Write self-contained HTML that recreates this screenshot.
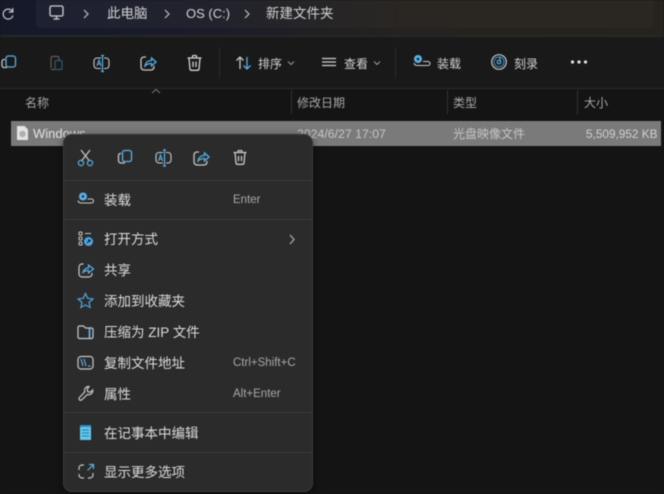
<!DOCTYPE html>
<html lang="zh-CN"><head><meta charset="utf-8"><style>
html,body{margin:0;padding:0;background:#141414}
#p{position:relative;width:664px;height:494px;overflow:hidden;background:#141414;font-family:"Liberation Sans","Noto Sans CJK SC",sans-serif;color:#d2d2d2;filter:blur(.5px)}
#p div,#p span,#p svg{position:absolute}
.t{white-space:nowrap;line-height:18px;height:18px}
.m{font-size:13.5px;left:104px;color:#dcdcdc}
.s{font-size:11.5px;left:233px;color:#a8a8a8}
.d{left:63px;width:249px;height:1px;background:#383838}
.h{font-size:12px;color:#a6a6a6;top:94px}
.v{width:1px;background:#333}
svg{overflow:visible}
</style></head><body><div id="p">
<div style="left:0;top:0;width:664px;height:35px;background:linear-gradient(90deg,#15192a 0,#1a1c2a 30%,#25221f 60%,#26231e 100%)"></div>
<div style="left:36px;top:-8px;width:618px;height:36px;border-radius:5px;background:linear-gradient(90deg,#1e2133 0,#22232c 30%,#2a2722 60%,#2a2722 100%)"></div>
<div style="left:0;top:35px;width:664px;height:2px;background:#262626"></div>
<div style="left:0;top:37px;width:664px;height:52px;background:#191919"></div>
<div style="left:0;top:88px;width:664px;height:1px;background:#2c2c2c"></div>

<svg style="left:0;top:4px" width="16" height="20" fill="none" stroke="#c8c8c8" stroke-width="1.2"><path d="M12.5 7.5A5 5 0 1 0 13 11.5"/><path d="M12.8 4v4h-4"/></svg>
<svg style="left:48px;top:4px" width="18" height="18" fill="none" stroke="#d0d0d0" stroke-width="1.3"><rect x="2" y="2" width="13" height="10" rx="1.6"/><path d="M5.5 15h6M8.500 12v3"/></svg>
<svg style="left:82px;top:9px" width="8" height="10" fill="none" stroke="#c0c0c0" stroke-width="1.2"><path d="M2 1l4 4-4 4"/></svg>
<span class="t" style="left:107px;top:5px;font-size:13.5px">此电脑</span>
<svg style="left:163px;top:9px" width="8" height="10" fill="none" stroke="#c0c0c0" stroke-width="1.2"><path d="M2 1l4 4-4 4"/></svg>
<span class="t" style="left:186px;top:5px;font-size:13px">OS (C:)</span>
<svg style="left:243px;top:9px" width="8" height="10" fill="none" stroke="#c0c0c0" stroke-width="1.2"><path d="M2 1l4 4-4 4"/></svg>
<span class="t" style="left:266px;top:5px;font-size:13.5px">新建文件夹</span>

<!-- toolbar -->
<svg style="left:0;top:53px" width="20" height="20" fill="none" stroke-width="1.3"><rect x="6" y="3" width="9.500" height="11" rx="2.400" stroke="#5ab0e6"/><path d="M5 6.500H4a2 2 0 0 0-2 2v4a2 2 0 0 0 2 2h3" stroke="#c8c8c8"/></svg>
<svg style="left:47px;top:53px" width="20" height="20" fill="none" stroke-width="1.2"><path d="M4 15V5a1.500 1.500 0 0 1 1.500-1.500h5A1.500 1.500 0 0 1 12 5v2" stroke="#5c5c5c"/><rect x="8" y="7.500" width="7" height="9" rx="1.400" stroke="#2f5a70"/><path d="M4 16.500h4" stroke="#5c5c5c"/></svg>
<svg style="left:92px;top:53px" width="20" height="20" fill="none" stroke-width="1.100"><rect x="2" y="5" width="15" height="10.500" rx="3" stroke="#c8c8c8"/><rect x="9" y="3" width="3" height="15" fill="#191919" stroke="none"/><path d="M10.500 2.500v16M9 2.500h3M9 18.500h3" stroke="#5ab0e6" stroke-width="1.200"/><path d="M5 13l2-6 2 6M5.700 11h2.600" stroke="#5ab0e6"/></svg>
<svg style="left:139px;top:53px" width="20" height="20" fill="none" stroke-width="1.300"><path d="M7 4H5a3 3 0 0 0-3 3v7a3 3 0 0 0 3 3h7a3 3 0 0 0 3-3v-1" stroke="#c8c8c8"/><path d="M6 13c.5-3.500 3-5.500 6.500-5.500V5l4.500 4-4.500 4v-2.500C10 10.500 8 11 6 13z" stroke="#5ab0e6"/></svg>
<svg style="left:185px;top:53px" width="20" height="20" fill="none" stroke="#d2d2d2" stroke-width="1.300"><path d="M2.500 5h14M7.500 5V3.500a1 1 0 0 1 1-1h2a1 1 0 0 1 1 1V5M4 5l1 11a1.500 1.500 0 0 0 1.500 1.300h6A1.500 1.500 0 0 0 14 16l1-11M8 8.500v5.500M11 8.500v5.500"/></svg>
<div class="v" style="left:219px;top:48px;height:30px;background:#2b2b2b"></div>
<svg style="left:235px;top:54px" width="18" height="18" fill="none" stroke-width="1.3"><path d="M5 15V3M1.500 6.500L5 3l3.500 3.500" stroke="#c8c8c8"/><path d="M12 3v12M8.500 11.500L12 15l3.500-3.500" stroke="#5ab0e6"/></svg>
<span class="t" style="left:258px;top:55px;font-size:12px">排序</span>
<svg style="left:287px;top:60px" width="8" height="6" fill="none" stroke="#999"><path d="M1 1.500l3 3 3-3"/></svg>
<svg style="left:321px;top:56px" width="16" height="14" fill="none" stroke="#d0d0d0" stroke-width="1.200"><path d="M1 2.500h14M1 6h14M1 9.500h14"/></svg>
<span class="t" style="left:344px;top:55px;font-size:12px">查看</span>
<svg style="left:373px;top:60px" width="8" height="6" fill="none" stroke="#999"><path d="M1 1.500l3 3 3-3"/></svg>
<div class="v" style="left:395px;top:48px;height:30px;background:#2b2b2b"></div>
<svg style="left:412px;top:53px" width="20" height="18" fill="none"><circle cx="6" cy="6" r="4" fill="#5ab0e6"/><circle cx="6" cy="6" r="1.300" fill="#14222c"/><path d="M11 8.500h5a2 2 0 0 1 0 4H5a3 3 0 0 1-3-2.500" stroke="#c8c8c8" stroke-width="1.100"/></svg>
<span class="t" style="left:437px;top:55px;font-size:12px">装载</span>
<svg style="left:490px;top:53px" width="20" height="20" fill="none"><circle cx="9" cy="9" r="7.300" stroke="#c8c8c8" stroke-width="1.200"/><circle cx="9" cy="9" r="5" stroke="#3c86b4" stroke-width="1.200"/><circle cx="9" cy="9" r="1.800" stroke="#5ab0e6" stroke-width="1.200"/><path d="M10 3.500v5" stroke="#5ab0e6"/></svg>
<span class="t" style="left:514px;top:55px;font-size:12px">刻录</span>
<svg style="left:570px;top:59px" width="18" height="6" fill="#e6e6e6"><circle cx="2.500" cy="3" r="1.600"/><circle cx="9" cy="3" r="1.600"/><circle cx="15.500" cy="3" r="1.600"/></svg>

<!-- header -->
<svg style="left:150px;top:88px" width="12" height="7" fill="none" stroke="#7a7a7a"><path d="M2 5l4-3.500L10 5"/></svg>
<span class="t h" style="left:25px">名称</span>
<div class="v" style="left:291px;top:90px;height:24px"></div>
<span class="t h" style="left:297px">修改日期</span>
<div class="v" style="left:447px;top:90px;height:24px"></div>
<span class="t h" style="left:453px">类型</span>
<div class="v" style="left:577px;top:90px;height:24px"></div>
<span class="t h" style="left:584px">大小</span>

<!-- row -->
<div style="left:11px;top:121px;width:650px;height:25px;background:#7a7a7a"></div>
<svg style="left:16px;top:125px" width="13" height="16"><path d="M1 1h7.500L12 4.500V15H1z" fill="#e4e4e4"/><circle cx="6.500" cy="9" r="3.200" fill="#b0b0b0"/></svg>
<span class="t" style="left:33px;top:125px;font-size:13px;color:#e2e2e2">Windows</span>
<span class="t" style="left:297px;top:125px;font-size:12.300px;color:#c6c6c6">2024/6/27 17:07</span>
<span class="t" style="left:453px;top:125px;font-size:12px;color:#c6c6c6">光盘映像文件</span>
<span class="t" style="left:586px;top:125px;font-size:11.800px;color:#d0d0d0">5,509,952 KB</span>

<!-- menu -->
<div style="left:63px;top:134px;width:248px;height:356px;background:#2b2b2b;border:1px solid #3a3a3a;border-radius:9px;box-shadow:0 2px 8px rgba(0,0,0,.5)"></div>

<svg style="left:77px;top:149px" width="18" height="18" fill="none" stroke-width="1.200"><path d="M4 1l8.500 11M13 1L4.500 12" stroke="#c8c8c8"/><circle cx="4" cy="14" r="2.600" stroke="#5ab0e6"/><circle cx="13" cy="14" r="2.600" stroke="#5ab0e6"/></svg>
<svg style="left:117px;top:149px" width="18" height="18" fill="none" stroke-width="1.300"><rect x="5.500" y="1.500" width="9" height="11" rx="2.200" stroke="#5ab0e6"/><path d="M4 4.500a2 2 0 0 0-2.500 2v5a2.500 2.500 0 0 0 2.500 2.500h4" stroke="#c8c8c8"/></svg>
<svg style="left:155px;top:149px" width="18" height="18" fill="none" stroke-width="1.100"><rect x="1" y="3.500" width="15" height="10.500" rx="3" stroke="#c8c8c8"/><rect x="8" y="2" width="3" height="14" fill="#2b2b2b" stroke="none"/><path d="M9.500 1v16M8 1h3M8 17h3" stroke="#5ab0e6" stroke-width="1.200"/><path d="M3.500 12l2-6 2 6M4.200 10h2.600" stroke="#5ab0e6"/></svg>
<svg style="left:193px;top:149px" width="18" height="18" fill="none" stroke-width="1.300"><path d="M6 3H4a3 3 0 0 0-3 3v7a3 3 0 0 0 3 3h7a3 3 0 0 0 3-3v-1" stroke="#c8c8c8"/><path d="M5 12c.5-3.500 3-5.500 6.500-5.500V4l4.500 4-4.500 4V9.500C9 9.500 7 10 5 12z" stroke="#5ab0e6"/></svg>
<svg style="left:232px;top:149px" width="18" height="18" fill="none" stroke="#c8c8c8" stroke-width="1.300"><path d="M1.500 3.500h13M6 3.500V2.500a1 1 0 0 1 1-1h2a1 1 0 0 1 1 1v1M3 3.500l1 10.500a1.500 1.500 0 0 0 1.500 1.300h5A1.500 1.500 0 0 0 12 14l1-10.500M6.500 7v5M9.500 7v5"/></svg>
<div class="d" style="top:180px"></div>

<svg style="left:77px;top:190px" width="18" height="18" fill="none"><circle cx="6" cy="6.500" r="4" fill="#5ab0e6"/><circle cx="6" cy="6.500" r="1.200" fill="#14222c"/><path d="M10.500 9h4a2 2 0 0 1 0 4H4a3 3 0 0 1-3-2.500" stroke="#c8c8c8" stroke-width="1.100"/></svg>
<span class="t m" style="top:192px">装载</span><span class="t s" style="top:191px">Enter</span>
<div class="d" style="top:219px"></div>

<svg style="left:78px;top:230px" width="18" height="18" fill="none" stroke="#c8c8c8"><rect x="1" y="2" width="3" height="3" rx=".8"/><rect x="1" y="7" width="3" height="3" rx=".8"/><rect x="1" y="12" width="3" height="3" rx=".8"/><path d="M7 3.500h6"/><circle cx="10.500" cy="11.500" r="4.500" fill="#4aa8e8" stroke="none"/><path d="M9 13l3-3M10 10h2v2" stroke="#15222c"/></svg>
<span class="t m" style="top:231px">打开方式</span>
<svg style="left:288px;top:234px" width="8" height="11" fill="none" stroke="#b0b0b0" stroke-width="1.200"><path d="M2 1l4 4.500-4 4.500"/></svg>

<svg style="left:78px;top:262px" width="17" height="17" fill="none" stroke-width="1.200"><path d="M5.500 2H4a3 3 0 0 0-3 3v7a3 3 0 0 0 3 3h7a3 3 0 0 0 3-3v-1" stroke="#c8c8c8"/><path d="M5 10.500C5.500 7.500 8 6 10.500 6V3l5 4-5 4V8.500c-2.500 0-4 .5-5.500 2z" stroke="#5ab0e6"/></svg>
<span class="t m" style="top:262px">共享</span>

<svg style="left:77px;top:292px" width="18" height="18" fill="none" stroke="#4ea6e0" stroke-width="1.200"><path d="M8.500 1.500l2.200 4.800 5.200.6-3.900 3.500 1.100 5.100-4.600-2.600-4.600 2.600 1.100-5.100L1.100 6.900l5.200-.6z"/></svg>
<span class="t m" style="top:293px">添加到收藏夹</span>

<svg style="left:77px;top:324px" width="18" height="16" fill="none" stroke-width="1.200"><path d="M1 3.500A1.500 1.500 0 0 1 2.500 2h4l2 2h6A1.500 1.500 0 0 1 16 5.500v7.500a1.500 1.500 0 0 1-1.500 1.500h-12A1.500 1.500 0 0 1 1 13z" stroke="#c8c8c8"/><path d="M12.500 4.500v9.500" stroke="#5ab0e6" stroke-width="1.800"/></svg>
<span class="t m" style="top:324px">压缩为 ZIP 文件</span>

<svg style="left:77px;top:355px" width="18" height="16" fill="none" stroke-width="1.200"><rect x="1" y="1.500" width="15" height="12.500" rx="3" stroke="#c8c8c8"/><path d="M4 4l2 7M7 4l2 7" stroke="#5ab0e6"/><path d="M11 11h2.500" stroke="#5ab0e6"/></svg>
<span class="t m" style="top:355px">复制文件地址</span><span class="t s" style="top:354px">Ctrl+Shift+C</span>

<svg style="left:78px;top:385px" width="17" height="17" fill="none" stroke="#c8c8c8" stroke-width="1.200"><path d="M11 1.500a4 4 0 0 0-4.200 5.300L1.500 12.500a1.600 1.600 0 0 0 2.300 2.300l5.500-5.400A4 4 0 0 0 14.700 5l-2.600 2.300-2.400-.7-.5-2.300z"/></svg>
<span class="t m" style="top:386px">属性</span><span class="t s" style="top:385px">Alt+Enter</span>
<div class="d" style="top:412px"></div>

<svg style="left:79px;top:425px" width="14" height="16"><rect x="1" y="0" width="11" height="15" fill="#62c6ee"/><rect x="1" y="0" width="11" height="2" fill="#2f86c4"/><path d="M3 5h7M3 8h7M3 11h7" stroke="#2a7ea6" stroke-width="1"/></svg>
<span class="t m" style="top:425px">在记事本中编辑</span>
<div class="d" style="top:452px"></div>

<svg style="left:78px;top:463px" width="17" height="17" fill="none" stroke-width="1.200"><path d="M6 2H4a3 3 0 0 0-3 3v2M1 11v1a3 3 0 0 0 3 3h2M10 15h2a3 3 0 0 0 3-3v-2" stroke="#c8c8c8"/><path d="M9.500 7.500L15 2M11 1.500h4.500V6" stroke="#5ab0e6"/></svg>
<span class="t m" style="top:464px">显示更多选项</span>
</div></body></html>
